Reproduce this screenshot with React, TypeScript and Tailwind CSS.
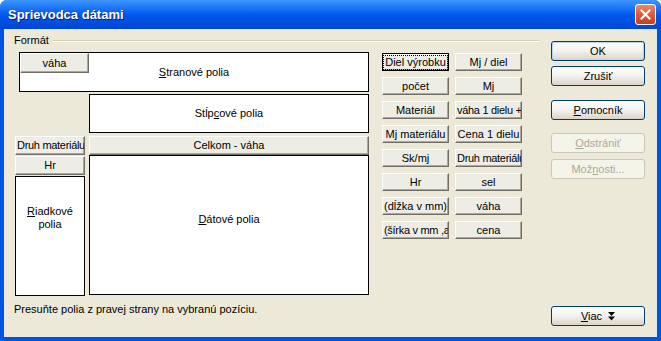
import React from 'react';

const font = "font-['Liberation_Sans',Arial,sans-serif]";

// classic 3D field button (pivot fields)
function FieldButton({ label, className = '', focused = false }: { label: string; className?: string; focused?: boolean }) {
  return (
    <div
      className={`flex items-center justify-center overflow-hidden whitespace-nowrap bg-[#EEEDE5] text-[11px] leading-none text-black ${
        focused
          ? 'border border-black shadow-[inset_1px_1px_0_#fff,inset_-1px_-1px_0_#aca899]'
          : 'border border-t-white border-l-white border-b-[#716F64] border-r-[#716F64] shadow-[inset_-1px_-1px_0_#aca899]'
      } ${className}`}
    >
      {focused ? (
        <span className="px-[1px] py-[1px] outline outline-1 outline-dotted outline-black">{label}</span>
      ) : (
        label
      )}
    </div>
  );
}

// XP style push button
function XpButton({
  children,
  disabled = false,
  isDefault = false,
  className = '',
}: {
  children: React.ReactNode;
  disabled?: boolean;
  isDefault?: boolean;
  className?: string;
}) {
  return (
    <div
      className={`flex h-[20px] w-[94px] items-center justify-center rounded-[3px] border text-[11px] leading-none ${
        disabled
          ? 'border-[#C9C7BA] bg-[#F5F4EA] text-[#ACA899]'
          : 'border-[#003C74] bg-gradient-to-b from-white via-[#F3F2EE] to-[#D9D5CA] text-black'
      } ${isDefault ? 'shadow-[inset_0_0_0_1px_#B9D2F5]' : ''} ${className}`}
    >
      {children}
    </div>
  );
}

const fields: string[][] = [
  ['Diel výrobku', 'Mj / diel'],
  ['počet', 'Mj'],
  ['Materiál', 'váha 1 dielu +'],
  ['Mj materiálu', 'Cena 1 dielu'],
  ['Sk/mj', 'Druh materiálu'],
  ['Hr', 'sel'],
  ['(dĺžka v mm)', 'váha'],
  ['(šírka v mm ,a', 'cena'],
];

export default function App() {
  return (
    <div className={`${font} h-[341px] w-[661px] overflow-hidden bg-white`}>
      <div className="flex h-full w-full flex-col overflow-hidden rounded-t-[7px] bg-[#0054E3]">
        {/* Title bar */}
        <div className="flex h-[29px] shrink-0 items-center justify-between bg-gradient-to-b from-[#3D95FF] via-[#0058EE] to-[#0046D5] pl-[8px] pr-[5px]">
          <span className="text-[13px] font-bold text-white [text-shadow:1px_1px_0_#0A1F6E]">Sprievodca dátami</span>
          <div className="flex h-[21px] w-[21px] items-center justify-center rounded-[3px] border border-white bg-gradient-to-b from-[#E9886A] via-[#E05A32] to-[#C6401D]">
            <svg width="11" height="11" viewBox="0 0 11 11">
              <path d="M1.5 1.5 L9.5 9.5 M9.5 1.5 L1.5 9.5" stroke="white" strokeWidth="2" strokeLinecap="square" />
            </svg>
          </div>
        </div>

        {/* Body */}
        <div className="mx-[4px] mb-[4px] flex flex-1 bg-[#ECE9D8] text-[11px] text-black">
          {/* Left part */}
          <div className="flex w-[536px] flex-col pl-[10px]">
            {/* group header */}
            <div className="mt-[6px] flex items-center">
              <span className="leading-none">Formát</span>
              <div className="ml-[4px] h-[2px] flex-1 border-t border-t-[#D0D0BF] border-b border-b-white" />
            </div>

            <div className="mt-[6px] flex">
              {/* Pivot layout */}
              <div className="ml-[1px] flex w-[354px] flex-col">
                <div className="ml-[4px] grid h-[40px] w-[350px] border border-black bg-white">
                  <FieldButton label="váha" className="[grid-area:1/1] h-[20px] w-[69px] self-start justify-self-start" />
                  <div className="[grid-area:1/1] flex items-center justify-center">
                    <span>
                      <u>S</u>tranové polia
                    </span>
                  </div>
                </div>

                <div className="ml-[74px] mt-[2px] flex h-[39px] w-[280px] items-center justify-center border border-black bg-white">
                  <span>
                    Stĺp<u>c</u>ové polia
                  </span>
                </div>

                <div className="mt-[3px] flex gap-[4px]">
                  <div className="flex w-[70px] flex-col gap-[1px]">
                    <FieldButton label="Druh materiálu" className="h-[19px] w-[70px] justify-start pl-[1px] tracking-[-0.3px]" />
                    <FieldButton label="Hr" className="h-[19px] w-[70px]" />
                    <div className="flex h-[120px] flex-col items-center border border-black bg-white pt-[28px] leading-[13px]">
                      <span>
                        <u>R</u>iadkové
                      </span>
                      <span>polia</span>
                    </div>
                  </div>
                  <div className="flex w-[280px] flex-col">
                    <FieldButton label="Celkom - váha" className="h-[19px] w-[280px]" />
                    <div className="flex h-[140px] justify-center border border-black bg-white pt-[55px]">
                      <span>
                        <u>D</u>átové polia
                      </span>
                    </div>
                  </div>
                </div>
              </div>

              {/* Available fields */}
              <div className="ml-[13px] mt-[1px] grid grid-cols-[67px_67px] gap-x-[6px] gap-y-[6px] self-start">
                {fields.flat().map((f, i) => (
                  <FieldButton
                    key={i}
                    label={f}
                    focused={i === 0}
                    className={`h-[18px] w-[67px] ${f.length > 12 ? 'justify-start pl-[1px] tracking-[-0.3px]' : ''}`}
                  />
                ))}
              </div>
            </div>

            <div className="mt-[8px] leading-none">Presuňte polia z pravej strany na vybranú pozíciu.</div>
          </div>

          {/* Right buttons */}
          <div className="ml-[11px] flex flex-col pt-[12px]">
            <XpButton isDefault>OK</XpButton>
            <XpButton className="mt-[5px]">Zrušiť</XpButton>
            <XpButton className="mt-[14px]">
              <span>
                <u>P</u>omocník
              </span>
            </XpButton>
            <XpButton disabled className="mt-[13px]">
              <span>
                <u>O</u>dstrániť
              </span>
            </XpButton>
            <XpButton disabled className="mt-[6px]">
              <span>
                Mož<u>n</u>osti...
              </span>
            </XpButton>
            <XpButton className="mt-[127px]">
              <span className="flex items-center gap-[6px]">
                <span>
                  <u>V</u>iac
                </span>
                <svg width="7" height="9" viewBox="0 0 7 9">
                  <path d="M0 0 H7 L3.5 4 Z M0 4.5 H7 L3.5 8.5 Z" fill="black" />
                </svg>
              </span>
            </XpButton>
          </div>
        </div>
      </div>
    </div>
  );
}
